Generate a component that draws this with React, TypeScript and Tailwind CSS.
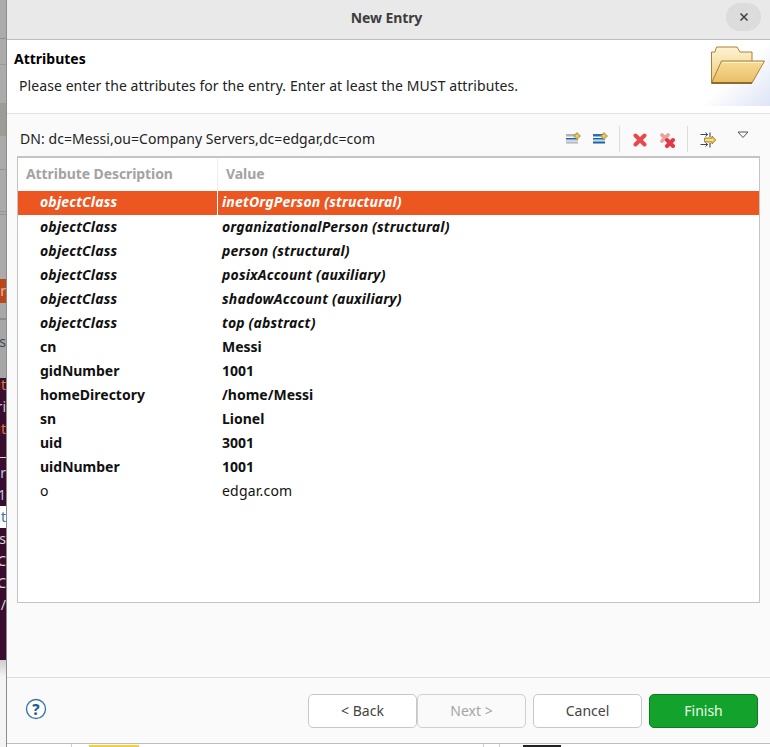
import React from "react";

const font = "font-['Noto_Sans','Open_Sans',sans-serif]";

const rows = [
  { name: "objectClass", value: "inetOrgPerson (structural)", kind: "must", selected: true },
  { name: "objectClass", value: "organizationalPerson (structural)", kind: "must" },
  { name: "objectClass", value: "person (structural)", kind: "must" },
  { name: "objectClass", value: "posixAccount (auxiliary)", kind: "must" },
  { name: "objectClass", value: "shadowAccount (auxiliary)", kind: "must" },
  { name: "objectClass", value: "top (abstract)", kind: "must" },
  { name: "cn", value: "Messi", kind: "bold" },
  { name: "gidNumber", value: "1001", kind: "bold" },
  { name: "homeDirectory", value: "/home/Messi", kind: "bold" },
  { name: "sn", value: "Lionel", kind: "bold" },
  { name: "uid", value: "3001", kind: "bold" },
  { name: "uidNumber", value: "1001", kind: "bold" },
  { name: "o", value: "edgar.com", kind: "plain" },
];

// clipped terminal text that peeks out left of the dialog
const terminalLines = [
  { text: "ut", color: "text-[#e0783a]", bg: "" },
  { text: "ri", color: "text-[#c9c9d6]", bg: "" },
  { text: "ut", color: "text-[#e0783a]", bg: "" },
  { text: "_", color: "text-[#d8d8d8]", bg: "" },
  { text: "r", color: "text-[#b9cbe6]", bg: "" },
  { text: "1", color: "text-[#b9cbe6]", bg: "" },
  { text: "ut", color: "text-[#3a6ea5]", bg: "bg-white" },
  { text: "s", color: "text-[#d8d8d8]", bg: "" },
  { text: "C", color: "text-[#d8d8d8]", bg: "" },
  { text: "C", color: "text-[#d8d8d8]", bg: "" },
  { text: "/", color: "text-[#d8d8d8]", bg: "" },
];

// Bars icon with the small gold plus, used twice in the toolbar
const AddIcon = ({ active }: { active: boolean }) => (
  <svg width="16" height="16" viewBox="0 0 16 16">
    <rect x="1" y="3" width="11" height="2.500" fill={active ? "#2c6fb0" : "#b4b4b4"} />
    <rect x="1" y="7" width="12" height="1.500" fill="#1f5f9f" />
    <rect x="1" y="8.500" width="12" height="1" fill="#7fb0dc" />
    <rect x="1" y="10.500" width="12" height="1.500" fill={active ? "#1f5f9f" : "#b9b9b9"} />
    <rect x="1" y="12" width="12" height="1" fill={active ? "#7fb0dc" : "#d4d4d4"} />
    <path d="M11 2h2v2h2v2h-2v2h-2V6H9V4h2z" fill="#f0cf5c" stroke="#a8842a" strokeWidth="0.700" />
  </svg>
);

const DeleteIcon = () => (
  <svg width="16" height="16" viewBox="0 0 16 16">
    <path d="M3.500 4.500l9 9M12.500 4.500l-9 9" stroke="#e5484f" strokeWidth="4" strokeLinecap="round" />
  </svg>
);

const DeleteAllIcon = () => (
  <svg width="18" height="18" viewBox="0 0 18 18">
    <path d="M3 5l6 6M9 5l-6 6" stroke="#eda0a0" strokeWidth="3.800" strokeLinecap="round" />
    <path d="M8 10l6 6M14 10l-6 6" stroke="#e2384a" strokeWidth="4" strokeLinecap="round" />
  </svg>
);

const ExpandIcon = () => (
  <svg width="18" height="18" viewBox="0 0 18 18" fill="none">
    <path d="M1.500 4.500h7M6.500 2.500l2.200 2-2.200 2M1.500 14.500h7M6.500 12.500l2.200 2-2.200 2" stroke="#2f4a6a" strokeWidth="1" />
    <path d="M11 2.500v4.500M11 13v4.500" stroke="#333333" strokeWidth="1" />
    <path d="M5.500 8h7.500V6l3.800 4-3.800 4v-2H5.500z" fill="#ecc752" stroke="#94741f" strokeWidth="0.800" />
    <path d="M6.500 10h7.500" stroke="#fff3c0" strokeWidth="1" />
  </svg>
);

const FolderIcon = () => (
  <svg width="54" height="38" viewBox="0 0 54 38">
    <defs>
      <linearGradient id="folderBack" x1="0" y1="0" x2="0" y2="1">
        <stop offset="0" stopColor="#fdf3d2" />
        <stop offset="1" stopColor="#eccb7d" />
      </linearGradient>
      <linearGradient id="folderFront" x1="0" y1="0" x2="0" y2="1">
        <stop offset="0" stopColor="#f8dd94" />
        <stop offset="1" stopColor="#e8bd68" />
      </linearGradient>
    </defs>
    <path d="M0.500 37V6H4l1.500-5h20.500l3 5h12v31z" fill="url(#folderBack)" stroke="#a98232" strokeWidth="1" />
    <path d="M0.500 37l10-22H53.500L41 37z" fill="url(#folderFront)" stroke="#a98232" strokeWidth="1" />
    <path d="M0.500 37H41" stroke="#7c5a1c" strokeWidth="1.400" />
    <path d="M11.500 16.500H52" stroke="#fff6d8" strokeWidth="1" />
  </svg>
);

const Divider = () => <div className="h-[26px] w-px bg-[#dcdcdc]" />;

const Button = ({ label, className }: { label: string; className: string }) => (
  <div className={`flex h-[34px] w-[109px] items-center justify-center rounded-[5px] border text-[14px] ${className}`}>
    {label}
  </div>
);

export default function App() {
  return (
    <div className={`flex h-[747px] w-[770px] overflow-hidden bg-white ${font}`}>
      {/* sliver of the windows behind the dialog */}
      <div className="flex h-full w-[7px] shrink-0 flex-col overflow-hidden border-r border-[#8c8c8c] text-[14px] leading-[22px]">
        <div className="h-[39px] shrink-0 border-b border-[#8f8f8f] bg-[#ababab]" />
        <div className="h-[26px] shrink-0 border-b border-[#9a9a9a] bg-[#ababab]" />
        <div className="h-[38px] shrink-0 bg-[#ababab]" />
        <div className="h-[33px] shrink-0 bg-[#9d9d97]" />
        <div className="h-[34px] shrink-0 border-b border-[#949494] bg-[#ababab]" />
        <div className="h-[42px] shrink-0 border-b border-[#949494] bg-[#ababab]" />
        <div className="h-[3px] shrink-0 border-b border-[#949494] bg-[#ababab]" />
        <div className="h-[64px] shrink-0 bg-[#ababab]" />
        <div className="flex h-[24px] shrink-0 items-center justify-end overflow-hidden bg-[#b8481c] text-[#e8b9a0]">er</div>
        <div className="h-[15px] shrink-0 bg-[#a9a9a9]" />
        <div className="h-[2px] shrink-0 bg-[#8c8c8c]" />
        <div className="flex h-[58px] shrink-0 items-start justify-end overflow-hidden bg-[#a6a6a6] pt-[11px] text-[#3d4a55]">s</div>
        <div className="h-[282px] shrink-0 overflow-hidden bg-[#3a0d2e]">
          <div className="-mt-[4px] flex flex-col">
            {terminalLines.map((line, i) => (
              <div key={i} className={`flex h-[22px] shrink-0 items-center justify-end overflow-hidden ${line.color} ${line.bg}`}>
                {line.text}
              </div>
            ))}
          </div>
        </div>
        <div className="flex-1 bg-gradient-to-b from-[#cfcfcf] to-[#f4f4f4] to-20%" />
      </div>

      <div className="flex h-full w-[763px] flex-col">
        <div className="flex h-[743px] shrink-0 flex-col bg-[#fafafa] text-[#111]">
          {/* title bar */}
          <div className="relative flex h-[40px] shrink-0 items-center justify-center border-b border-[#bdbdbd] bg-[#e9e9e9] pb-[5px] pr-[4px]">
            <span className="text-[14px] font-bold text-[#3d3d3d] tracking-[-0.1px]">New Entry</span>
            <div className="absolute right-[9px] top-[3px] flex h-[28px] w-[35px] items-center justify-center rounded-full bg-[#dcdcdc]">
              <svg width="10" height="10" viewBox="0 0 10 10">
                <path d="M1.500 1.500l7 7M8.500 1.500l-7 7" stroke="#3d3d3d" strokeWidth="1.500" />
              </svg>
            </div>
          </div>

          {/* banner */}
          <div className="flex h-[74px] shrink-0 items-start justify-between border-b border-[#e2e2e2] bg-white">
            <div className="pl-[7px]">
              <div className="mt-[9px] text-[14px] font-bold leading-[19px] text-black">Attributes</div>
              <div className="mt-[8px] pl-[5px] text-[14px] leading-[19px] tracking-[0.08px] text-[#222]">
                Please enter the attributes for the entry. Enter at least the MUST attributes.
              </div>
            </div>
            <div className="flex h-[66px] w-[70px] justify-end bg-gradient-to-br from-white from-50% to-[#dde4f5] pr-[5px] pt-[6px]">
              <FolderIcon />
            </div>
          </div>

          {/* DN line with toolbar */}
          <div className="flex h-[41px] shrink-0 items-center pl-[13px] pr-[21px] pt-[8px]">
            <span className="flex-1 text-[14px] tracking-[0.06px] text-[#222]">DN: dc=Messi,ou=Company Servers,dc=edgar,dc=com</span>
            <AddIcon active={false} />
            <div className="ml-[11px]">
              <AddIcon active />
            </div>
            <div className="ml-[11px]">
              <Divider />
            </div>
            <div className="ml-[12px]">
              <DeleteIcon />
            </div>
            <div className="ml-[11px]">
              <DeleteAllIcon />
            </div>
            <div className="ml-[10px]">
              <Divider />
            </div>
            <div className="ml-[11px]">
              <ExpandIcon />
            </div>
            <svg className="mb-[8px] ml-[20px]" width="12" height="8" viewBox="0 0 12 8">
              <path d="M1 1h10L6 6.500z" fill="#fafafa" stroke="#555" strokeWidth="1" />
            </svg>
          </div>

          {/* attribute table */}
          <div className="mx-[10px] mt-[1px] h-[447px] shrink-0 border border-t-2 border-[#c4c4c4] bg-white">
            <div className="flex h-[33px] items-center text-[14px] font-bold tracking-[-0.08px] text-[#a3a3a3]">
              <div className="flex h-full w-[200px] items-center border-r border-[#eeeeee] pb-[2px] pl-[8px]">
                Attribute Description
              </div>
              <div className="pb-[2px] pl-[8px]">Value</div>
            </div>
            {rows.map((row, i) => (
              <div
                key={i}
                className={`flex h-[24px] items-start text-[14px] ${
                  row.selected ? "bg-[#ec5621] leading-[22px] text-white" : "leading-[24px] text-[#111]"
                } ${row.kind === "must" ? "font-bold italic tracking-[0.18px]" : row.kind === "bold" ? "font-bold" : "tracking-[0.2px]"}`}
              >
                <div className={`h-full w-[200px] pl-[22px] ${row.selected ? "border-r border-white" : ""}`}>
                  {row.name}
                </div>
                <div className="pl-[4px]">{row.value}</div>
              </div>
            ))}
          </div>

          {/* footer */}
          <div className="mt-[74px] flex flex-1 items-center border-t border-[#dfdfdf] pl-[18px] pr-[12px]">
            <svg className="mb-[3px]" width="22" height="22" viewBox="0 0 22 22">
              <circle cx="11" cy="11" r="9.500" fill="#fff" stroke="#3b78ad" strokeWidth="1.400" />
              <text x="11" y="16.500" textAnchor="middle" fontSize="15" fontWeight="800" fill="#1f5f96">?</text>
            </svg>
            <div className="flex-1" />
            <Button label="< Back" className="border-[#c8c8c8] bg-white text-[#444]" />
            <Button label="Next >" className="border-[#d0d0d0] bg-[#fafafa] text-[#a5a5a5]" />
            <Button label="Cancel" className="ml-[7px] border-[#c8c8c8] bg-white text-[#444]" />
            <Button label="Finish" className="ml-[7px] border-[#0e7d22] bg-[#13a32d] text-[#eafbe9]" />
          </div>
        </div>

        {/* what shows under the dialog */}
        <div className="flex flex-1 border-t border-[#bdbdbd] bg-white">
          <div className="ml-[64px] h-full w-px bg-[#cfcfcf]" />
          <div className="ml-[17px] mt-[1px] h-full w-[50px] bg-[#f2cf3c]" />
          <div className="ml-[344px] h-full w-px bg-[#cfcfcf]" />
          <div className="ml-[15px] h-full w-px bg-[#cfcfcf]" />
          <div className="ml-[23px] mt-[1px] h-full w-[38px] bg-[#222]" />
        </div>
      </div>
    </div>
  );
}
